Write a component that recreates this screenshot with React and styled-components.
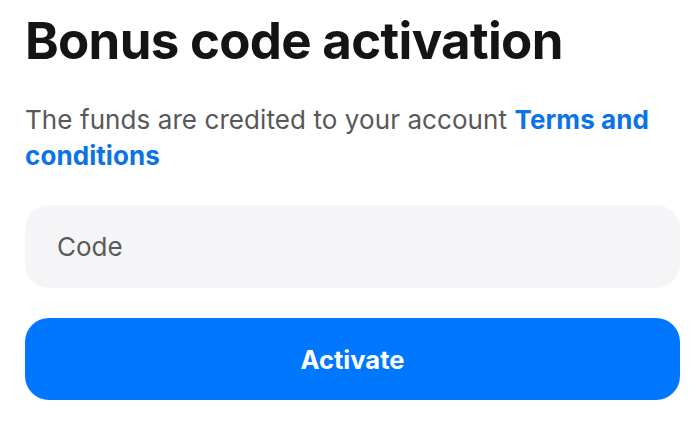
import React from 'react';
import styled, { createGlobalStyle } from 'styled-components';

const GlobalStyle = createGlobalStyle`
  body {
    margin: 0;
    background: #ffffff;
    font-family: Inter, "Noto Sans", sans-serif;
  }
`;

const Wrapper = styled.div`
  width: 655px;
  padding: 10px 0 0 25px;
  display: flex;
  flex-direction: column;
`;

const Title = styled.h1`
  margin: 0;
  font-size: 51px;
  line-height: 62px;
  font-weight: 700;
  color: #141414;
  letter-spacing: -0.7px;
`;

const Description = styled.p`
  margin: 30px 0 0;
  font-size: 26px;
  line-height: 36px;
  letter-spacing: 0.08px;
  color: #585858;
`;

const Link = styled.a`
  color: #0a74e6;
  font-weight: 700;
  text-decoration: none;
`;

const CodeInput = styled.input`
  margin-top: 31px;
  height: 83px;
  box-sizing: border-box;
  border: none;
  border-radius: 24px;
  background: #f5f5f7;
  padding: 0 32px;
  font-family: inherit;
  font-size: 26px;
  color: #141414;
  outline: none;
  &::placeholder {
    color: #5a5a5a;
  }
`;

const ActivateButton = styled.button`
  margin-top: 30px;
  height: 82px;
  border: none;
  border-radius: 24px;
  background: #0077ff;
  color: #ffffff;
  font-family: inherit;
  font-size: 25.5px;
  font-weight: 700;
  cursor: pointer;
`;

const App = () => {
  return (
    <>
      <GlobalStyle />
      <Wrapper>
        <Title>Bonus code activation</Title>
        <Description>
          The funds are credited to your account{' '}
          <Link href="#">Terms and conditions</Link>
        </Description>
        <CodeInput type="text" placeholder="Code" />
        <ActivateButton type="button">Activate</ActivateButton>
      </Wrapper>
    </>
  );
};

export default App;
